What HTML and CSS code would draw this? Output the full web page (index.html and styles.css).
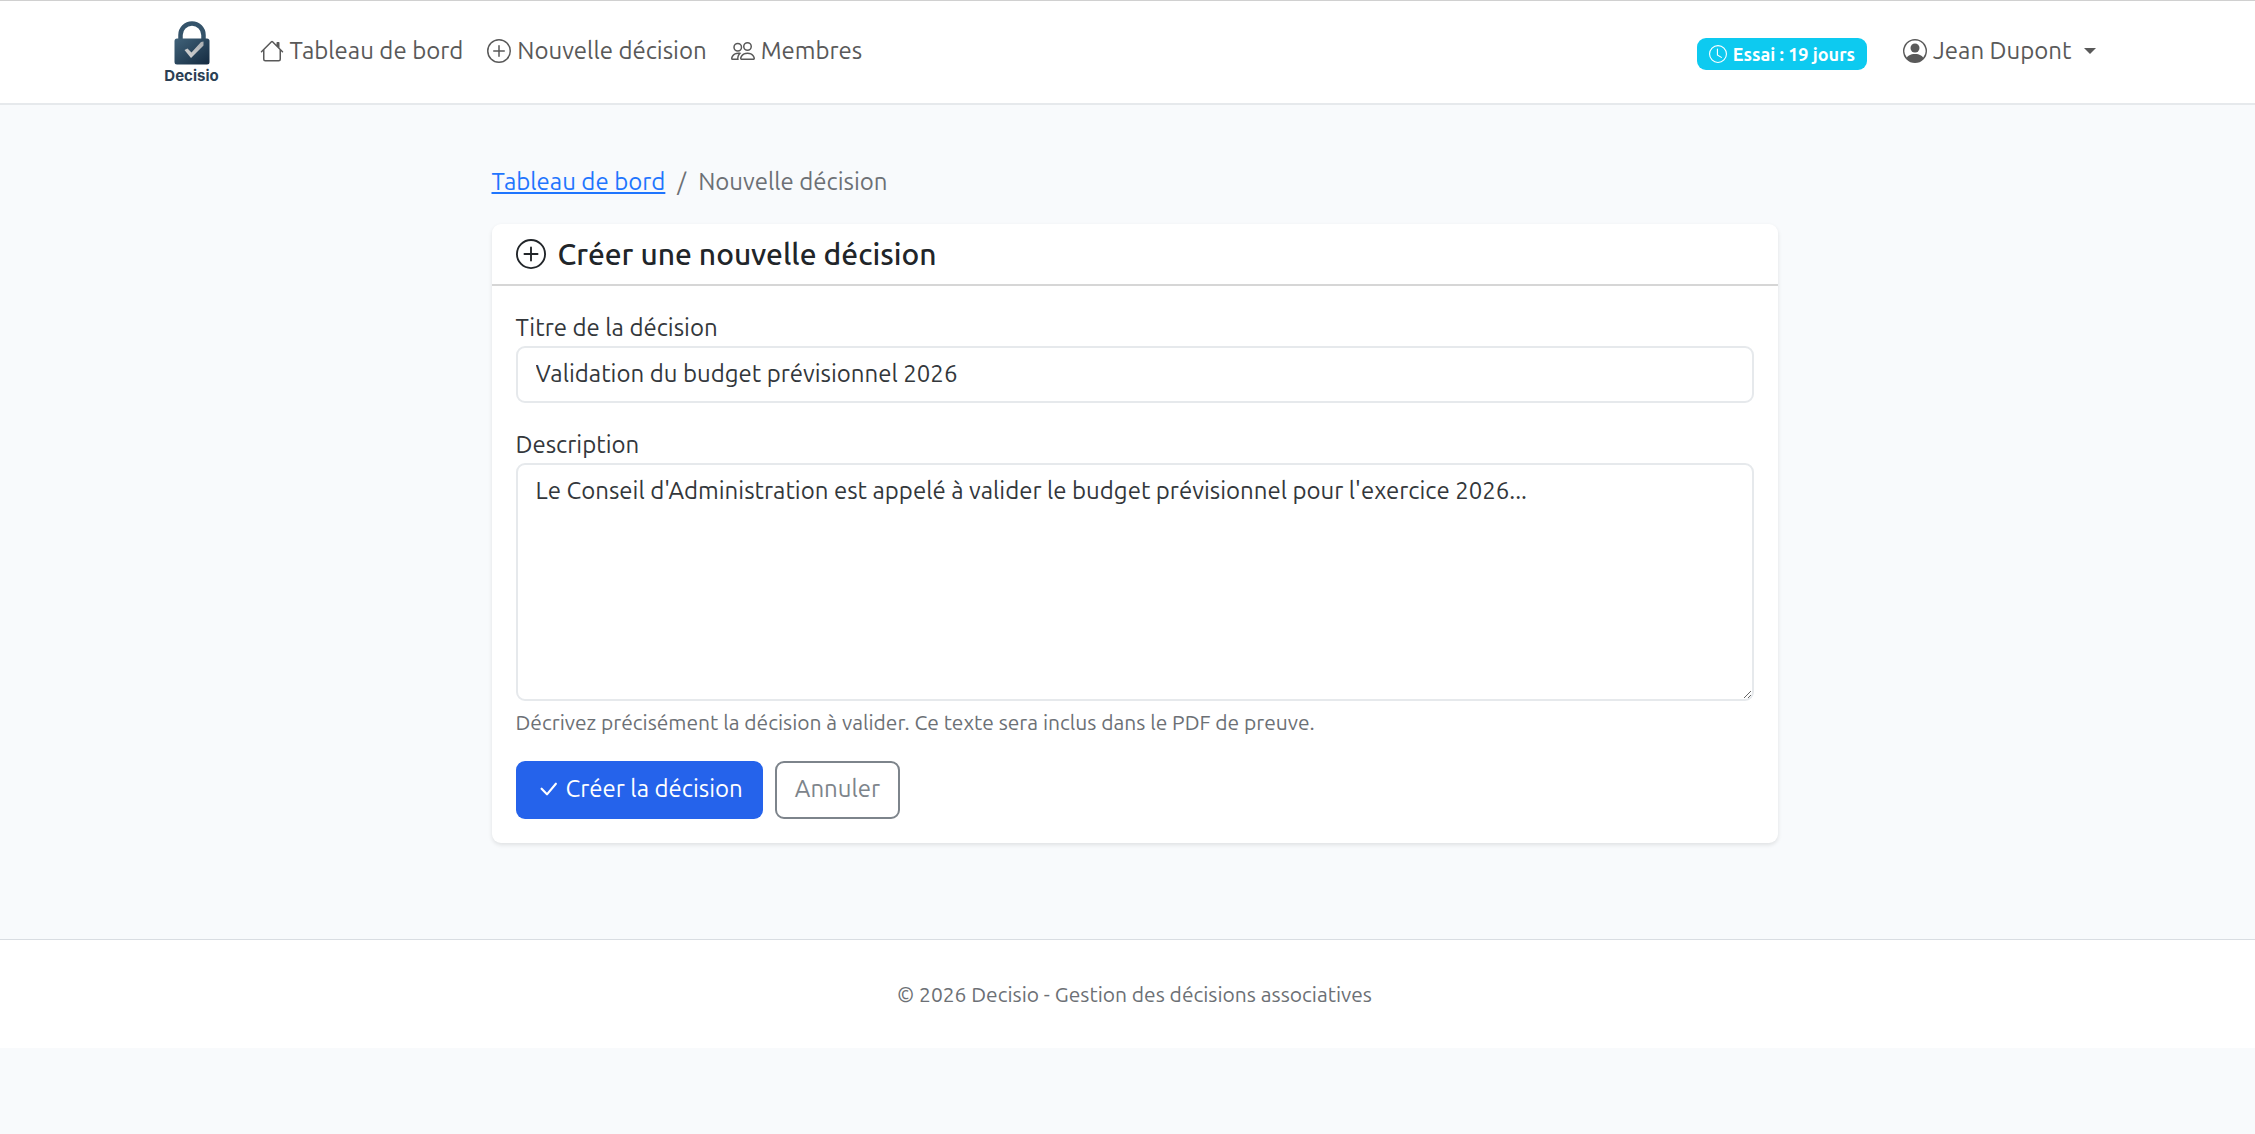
FILE: index.html
```html
<!DOCTYPE html>
<html lang="fr">
<head>
    <meta charset="UTF-8">
    <meta name="viewport" content="width=device-width, initial-scale=1.0">
    <title>Nouvelle décision - Decisio</title>
    <link rel="stylesheet" href="styles.css">
</head>
<body>
    <header class="navbar">
        <div class="container navbar-inner">
            <a class="brand" href="#">
                <svg class="brand-lock" viewBox="0 0 36 44" aria-hidden="true">
                    <defs>
                        <linearGradient id="lockFill" x1="0" y1="0" x2="1" y2="1">
                            <stop offset="0" stop-color="#41637a"/>
                            <stop offset="1" stop-color="#142a40"/>
                        </linearGradient>
                        <linearGradient id="checkFill" x1="0" y1="1" x2="1" y2="0">
                            <stop offset="0" stop-color="#d5d5d5"/>
                            <stop offset="1" stop-color="#a9adb0"/>
                        </linearGradient>
                    </defs>
                    <path d="M6.500 19V14a11.500 11.500 0 0 1 23 0v5" fill="none" stroke="#34536a" stroke-width="4.500"/>
                    <rect x="0.500" y="17.500" width="35" height="26" rx="2.500" fill="url(#lockFill)"/>
                    <path d="M10.500 29l3-1.500 4 4L27 21l2.500-.5v4L17 37z" fill="url(#checkFill)"/>
                </svg>
                <span class="brand-name">Decisio</span>
            </a>
            <nav class="nav">
                <a class="nav-link" href="#">
                    <svg class="icon" viewBox="0 0 16 16" aria-hidden="true"><path d="M8.707 1.500a1 1 0 0 0-1.414 0L.646 8.146a.5.5 0 0 0 .708.708L2 8.207V13.500A1.500 1.500 0 0 0 3.500 15h9a1.500 1.500 0 0 0 1.500-1.500V8.207l.646.647a.5.5 0 0 0 .708-.708L13 5.793V2.500a.5.5 0 0 0-.5-.5h-1a.5.5 0 0 0-.5.5v1.293zM13 7.207V13.500a.5.5 0 0 1-.5.5h-9a.5.5 0 0 1-.5-.5V7.207l5-5z"/></svg>
                    Tableau de bord
                </a>
                <a class="nav-link" href="#">
                    <svg class="icon" viewBox="0 0 16 16" aria-hidden="true"><path d="M8 15A7 7 0 1 1 8 1a7 7 0 0 1 0 14m0 1A8 8 0 1 0 8 0a8 8 0 0 0 0 16"/><path d="M8 4a.5.5 0 0 1 .5.5v3h3a.5.5 0 0 1 0 1h-3v3a.5.5 0 0 1-1 0v-3h-3a.5.5 0 0 1 0-1h3v-3A.5.5 0 0 1 8 4"/></svg>
                    Nouvelle décision
                </a>
                <a class="nav-link" href="#">
                    <svg class="icon" viewBox="0 0 16 16" aria-hidden="true"><path d="M15 14s1 0 1-1-1-4-5-4-5 3-5 4 1 1 1 1zm-7.978-1L7 12.996c.001-.264.167-1.030.76-1.720C8.312 10.629 9.282 10 11 10c1.717 0 2.687.63 3.240 1.276.593.69.758 1.457.76 1.720l-.008.002-.014.002zM11 7a2 2 0 1 0 0-4 2 2 0 0 0 0 4m3-2a3 3 0 1 1-6 0 3 3 0 0 1 6 0M6.936 9.280a6 6 0 0 0-1.230-.247A7 7 0 0 0 5 9c-4 0-5 3-5 4q0 1 1 1h4.216A2.240 2.240 0 0 1 5 13c0-1.010.377-2.042 1.090-2.904.243-.294.526-.569.846-.816M4.920 10A5.500 5.500 0 0 0 4 13H1c0-.26.164-1.030.76-1.724.545-.636 1.492-1.256 3.160-1.276M1.500 5.500a3 3 0 1 1 6 0 3 3 0 0 1-6 0m3-2a2 2 0 1 0 0 4 2 2 0 0 0 0-4"/></svg>
                    Membres
                </a>
            </nav>
            <div class="user-area">
                <span class="badge">
                    <svg class="icon icon-sm" viewBox="0 0 16 16" aria-hidden="true"><path d="M8 3.500a.5.5 0 0 0-1 0V9a.5.5 0 0 0 .252.434l3.500 2a.5.5 0 0 0 .496-.868L8 8.710z"/><path d="M8 16A8 8 0 1 0 8 0a8 8 0 0 0 0 16m7-8A7 7 0 1 1 1 8a7 7 0 0 1 14 0"/></svg>
                    Essai : 19 jours
                </span>
                <button class="nav-link user-menu" type="button" aria-haspopup="true">
                    <svg class="icon" viewBox="0 0 16 16" aria-hidden="true"><path d="M11 6a3 3 0 1 1-6 0 3 3 0 0 1 6 0"/><path fill-rule="evenodd" d="M0 8a8 8 0 1 1 16 0A8 8 0 0 1 0 8m8-7a7 7 0 0 0-5.468 11.370C3.242 11.226 4.805 10 8 10s4.757 1.225 5.468 2.370A7 7 0 0 0 8 1"/></svg>
                    Jean Dupont
                    <span class="caret"></span>
                </button>
            </div>
        </div>
    </header>

    <main class="page">
        <div class="content">
            <nav aria-label="Fil d'Ariane">
                <ol class="breadcrumb">
                    <li><a href="#">Tableau de bord</a></li>
                    <li class="active" aria-current="page">Nouvelle décision</li>
                </ol>
            </nav>

            <section class="card">
                <div class="card-header">
                    <h1 class="card-title">
                        <svg class="icon icon-lg" viewBox="0 0 16 16" aria-hidden="true"><path d="M8 15A7 7 0 1 1 8 1a7 7 0 0 1 0 14m0 1A8 8 0 1 0 8 0a8 8 0 0 0 0 16"/><path d="M8 4a.5.5 0 0 1 .5.5v3h3a.5.5 0 0 1 0 1h-3v3a.5.5 0 0 1-1 0v-3h-3a.5.5 0 0 1 0-1h3v-3A.5.5 0 0 1 8 4"/></svg>
                        Créer une nouvelle décision
                    </h1>
                </div>
                <form class="card-body">
                    <div class="field">
                        <label for="title">Titre de la décision</label>
                        <input class="form-control" type="text" id="title" name="title" value="Validation du budget prévisionnel 2026">
                    </div>
                    <div class="field">
                        <label for="description">Description</label>
                        <textarea class="form-control" id="description" name="description" rows="6" aria-describedby="descriptionHelp">Le Conseil d'Administration est appelé à valider le budget prévisionnel pour l'exercice 2026...</textarea>
                        <div class="form-text" id="descriptionHelp">Décrivez précisément la décision à valider. Ce texte sera inclus dans le PDF de preuve.</div>
                    </div>
                    <div class="actions">
                        <button class="btn btn-primary" type="submit">
                            <svg class="icon" viewBox="0 0 16 16" aria-hidden="true"><path d="M12.736 3.970a.733.733 0 0 1 1.047 0c.286.289.29.756.01 1.050L7.880 12.010a.733.733 0 0 1-1.065.02L3.217 8.384a.757.757 0 0 1 0-1.060.733.733 0 0 1 1.047 0l3.052 3.093 5.400-6.425z"/></svg>
                            Créer la décision
                        </button>
                        <button class="btn btn-outline" type="button">Annuler</button>
                    </div>
                </form>
            </section>
        </div>
    </main>

    <footer class="footer">
        <p>© 2026 Decisio - Gestion des décisions associatives</p>
    </footer>
</body>
</html>
```
FILE: styles.css
```css
* {
    box-sizing: border-box;
}
body {
    margin: 0;
    background: #f8fafc;
    color: #212529;
    font-family: Ubuntu, "Noto Sans", "Open Sans", sans-serif;
    font-size: 24px;
    line-height: 36px;
}
input, textarea, button {
    font: inherit;
}
.icon {
    width: 24px;
    height: 24px;
    flex: none;
    fill: currentColor;
}
.icon-sm {
    width: 18px;
    height: 18px;
}
.icon-lg {
    width: 30px;
    height: 30px;
}

/* the three page bands share the same axis */
.navbar, .page, .footer {
    padding-left: 14px;
}
.container {
    max-width: 1982px;
    margin: 0 auto;
    padding: 0 18px;
}

/* navbar */
.navbar {
    background: #fff;
    border-top: 1px solid #d0d0d0;
    border-bottom: 2px solid #e6e9ec;
}
.navbar-inner {
    display: flex;
    align-items: center;
    height: 102px;
}
.brand {
    display: flex;
    flex-direction: column;
    align-items: center;
    width: 60px;
    margin-right: 26px;
    padding-top: 4px;
    text-decoration: none;
}
.brand-lock {
    width: 36px;
    height: 44px;
}
.brand-name {
    color: #2b3f54;
    font-family: Inter, sans-serif;
    font-size: 15px;
    font-weight: 700;
    line-height: 22px;
}
.nav {
    display: flex;
}
.nav-link {
    display: flex;
    align-items: center;
    gap: 6px;
    padding: 10px 12px 12px;
    color: #595959;
    text-decoration: none;
    white-space: nowrap;
}
.user-area {
    display: flex;
    align-items: center;
    gap: 24px;
    margin-left: auto;
}
.user-menu {
    border: 0;
    background: none;
    cursor: pointer;
}
.caret {
    margin-left: 6px;
    border: 6px solid transparent;
    border-top-color: currentColor;
    border-bottom: 0;
}
.badge {
    display: flex;
    align-items: center;
    gap: 6px;
    margin-top: 3px;
    padding: 6px 12px;
    border-radius: 9px;
    background: #0dcaf0;
    color: #fff;
    font-size: 18px;
    font-weight: 700;
    line-height: 20px;
    white-space: nowrap;
}

/* page */
.page {
    padding-top: 59px;
    padding-bottom: 96px;
}
.content {
    max-width: 1286px;
    margin: 0 auto;
}
.breadcrumb {
    display: flex;
    margin: 0 0 24px;
    padding: 0;
    list-style: none;
}
.breadcrumb a {
    color: #1f75fe;
}
.breadcrumb .active {
    color: #6c7075;
}
.breadcrumb .active::before {
    content: "/";
    padding: 0 12px;
}
.card {
    border-radius: 9px;
    background: #fff;
    box-shadow: 0 2px 4px rgba(0, 0, 0, 0.1);
}
.card-header {
    padding: 12px 24px;
    border-bottom: 2px solid #d6d6d6;
}
.card-title {
    display: flex;
    align-items: center;
    gap: 12px;
    margin: 0;
    font-size: 30px;
    font-weight: 500;
    line-height: 36px;
}
.card-body {
    padding: 24px;
}
.field {
    margin-bottom: 24px;
}
.field label {
    display: block;
    color: #33373b;
}
.form-control {
    display: block;
    width: 100%;
    padding: 8px 18px 10px;
    border: 2px solid #e6e9ec;
    border-radius: 9px;
    background: #fff;
    color: #33373b;
}
input.form-control {
    height: 57px;
}
textarea.form-control {
    resize: vertical;
}
.form-text {
    margin-top: 6px;
    color: #6c7075;
    font-size: 21px;
    line-height: 30px;
}
.actions {
    display: flex;
    gap: 12px;
}
.btn {
    display: flex;
    align-items: center;
    gap: 6px;
    padding: 8px 18px 10px;
    border: 2px solid transparent;
    border-radius: 9px;
    cursor: pointer;
}
.btn-primary {
    background: #2563eb;
    color: #fff;
}
.btn-outline {
    border-color: #7d848b;
    background: #fff;
    color: #7d848b;
}

/* footer */
.footer {
    border-top: 1px solid #d9dde2;
    background: #fff;
    color: #6c7075;
    font-size: 21px;
    line-height: 36px;
    text-align: center;
}
.footer p {
    margin: 0;
    padding: 36px 0;
}
```
